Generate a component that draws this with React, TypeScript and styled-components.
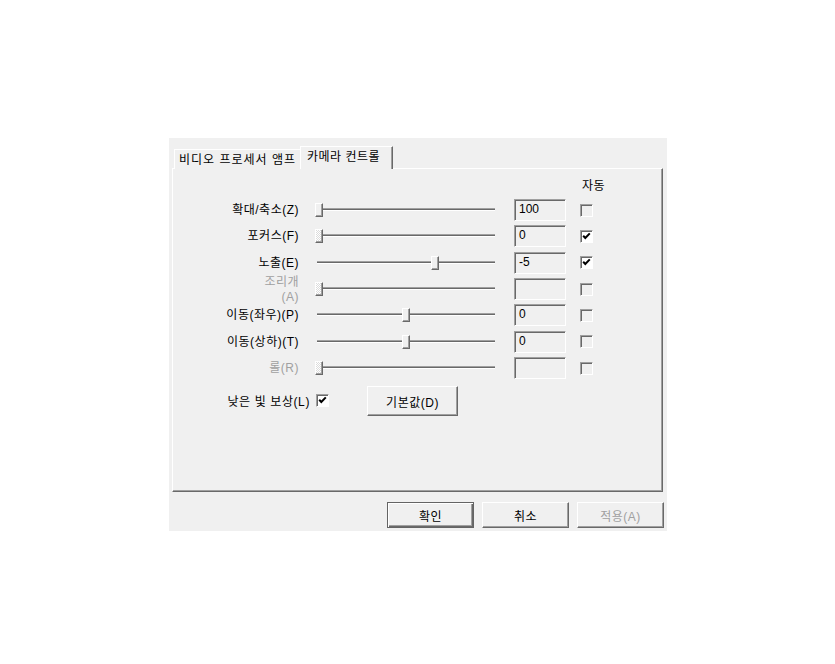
import React from 'react';
import styled, { createGlobalStyle, css } from 'styled-components';

const GlobalStyle = createGlobalStyle`
  html, body {
    margin: 0;
    padding: 0;
    background: #ffffff;
  }
  body {
    font-family: "Liberation Sans", "Noto Sans CJK KR", sans-serif;
    font-size: 12px;
    color: #000000;
  }
`;

const raised = css`
  border: 1px solid;
  border-color: #ffffff #696969 #696969 #ffffff;
  box-shadow: inset -1px -1px #a0a0a0;
`;

const sunken = css`
  border: 1px solid;
  border-color: #a0a0a0 #ffffff #ffffff #a0a0a0;
  box-shadow: inset 1px 1px #696969;
`;

const Page = styled.div`
  padding: 138px 0 0 169px;
`;

const Dialog = styled.div`
  width: 498px;
  box-sizing: border-box;
  padding: 8px 4px 3px 3px;
  background: #f0f0f0;
  display: flex;
  flex-direction: column;
`;

const TabStrip = styled.div`
  display: flex;
  align-items: flex-end;
  height: 23px;
  margin-bottom: -1px;
  padding-left: 2px;
  position: relative;
  z-index: 1;
`;

const Tab = styled.div<{ $active?: boolean; $width: number }>`
  box-sizing: border-box;
  position: relative;
  z-index: ${(p) => (p.$active ? 2 : 1)};
  width: ${(p) => p.$width}px;
  height: ${(p) => (p.$active ? 23 : 20)}px;
  margin-left: ${(p) => (p.$active ? -2 : 0)}px;
  background: #f0f0f0;
  border-top: 1px solid #ffffff;
  border-left: 1px solid #ffffff;
  border-right: 1px solid #696969;
  box-shadow: inset -1px 0 #a0a0a0;
  padding: ${(p) => (p.$active ? '2px 0 0 6px' : '2px 0 0 4px')};
  letter-spacing: ${(p) => (p.$active ? 0.5 : 1)}px;
  white-space: nowrap;
  line-height: 16px;
`;

const Panel = styled.div`
  box-sizing: border-box;
  width: 491px;
  height: 324px;
  border: 1px solid;
  border-color: #ffffff #696969 #696969 #ffffff;
  box-shadow: inset -1px -1px #a0a0a0;
  padding-top: 2px;
`;

const HeaderRow = styled.div`
  height: 26px;
  display: flex;
  align-items: center;
  padding-left: 409px;
  letter-spacing: 0.5px;
`;

const Row = styled.div`
  height: 26.33px;
  display: flex;
  align-items: center;
`;

const Label = styled.div<{ $disabled?: boolean }>`
  width: 126px;
  text-align: right;
  line-height: 15px;
  padding-top: 1px;
  letter-spacing: 0.5px;
  color: ${(p) => (p.$disabled ? '#a0a0a0' : '#000000')};
`;

const SliderBox = styled.div`
  position: relative;
  width: 180px;
  height: 14px;
  margin-left: 16px;
`;

const Track = styled.div`
  position: absolute;
  left: 2px;
  right: 0;
  top: 5px;
  height: 1px;
  background: #696969;
  border-top: 1px solid #a0a0a0;
  border-bottom: 1px solid #ffffff;
`;

const Thumb = styled.div<{ $dither?: boolean }>`
  position: absolute;
  top: 0;
  width: 8px;
  height: 14px;
  box-sizing: border-box;
  ${raised};
  background: ${(p) =>
    p.$dither
      ? 'repeating-conic-gradient(#ffffff 0 25%, #dcdcdc 0 50%) 0 0 / 2px 2px'
      : '#f0f0f0'};
`;

const Edit = styled.div`
  box-sizing: border-box;
  width: 52px;
  height: 22px;
  margin-left: 19px;
  ${sunken};
  background: #f0f0f0;
  padding: 2px 0 0 4px;
  line-height: 15px;
`;

const CheckBox = styled.div<{ $checked?: boolean; $gap: number }>`
  box-sizing: border-box;
  width: 13px;
  height: 13px;
  margin-left: ${(p) => p.$gap}px;
  ${sunken};
  background: ${(p) => (p.$checked ? '#ffffff' : '#f0f0f0')};
  display: flex;
  align-items: center;
  justify-content: center;
  flex: none;
`;

const BottomRow = styled.div`
  display: flex;
  align-items: center;
  height: 30px;
  margin-top: 4px;
`;

const LowLightLabel = styled.div`
  width: 137px;
  text-align: right;
  letter-spacing: 0.6px;
`;

const PushButton = styled.button<{ $default?: boolean; $width: number; $height: number }>`
  box-sizing: border-box;
  width: ${(p) => p.$width}px;
  height: ${(p) => p.$height}px;
  font: inherit;
  letter-spacing: 0.5px;
  color: #000000;
  background: #f0f0f0;
  padding: 0;
  border: 1px solid;
  border-color: #ffffff #696969 #696969 #ffffff;
  box-shadow: inset -1px -1px #a0a0a0;
  ${(p) =>
    p.$default &&
    css`
      border-color: #646464;
      box-shadow: inset 1px 1px #ffffff, inset -1px -1px #696969, inset -2px -2px #a0a0a0;
    `}
  &:disabled {
    color: #a0a0a0;
  }
`;

const DefaultsButton = styled(PushButton)`
  margin-left: 38px;
  margin-top: 2px;
`;

const ButtonBar = styled.div`
  display: flex;
  justify-content: flex-end;
  gap: 8px;
  margin-top: 10px;
  margin-right: -1px;
`;

const CheckMark = () => (
  <svg width="9" height="9" viewBox="0 0 9 9">
    <polyline points="1.2,3.8 3.3,6 7.8,1.4" fill="none" stroke="#000" strokeWidth="2" />
  </svg>
);

interface IControl {
  label: React.ReactNode;
  pos: number;
  value: string;
  auto: boolean;
  disabled?: boolean;
  dither?: boolean;
}

const controls: Array<IControl> = [
  { label: '확대/축소(Z)', pos: 0, value: '100', auto: false },
  { label: '포커스(F)', pos: 0, value: '0', auto: true, dither: true },
  { label: '노출(E)', pos: 116, value: '-5', auto: true },
  {
    label: (
      <>
        조리개
        <br />
        (A)
      </>
    ),
    pos: 0,
    value: '',
    auto: false,
    disabled: true,
    dither: true,
  },
  { label: '이동(좌우)(P)', pos: 87, value: '0', auto: false },
  { label: '이동(상하)(T)', pos: 87, value: '0', auto: false },
  { label: '롤(R)', pos: 0, value: '', auto: false, disabled: true, dither: true },
];

const App: React.FunctionComponent = () => {
  return (
    <Page>
      <GlobalStyle />
      <Dialog>
        <TabStrip>
          <Tab $width={128}>비디오 프로세서 앰프</Tab>
          <Tab $width={93} $active>
            카메라 컨트롤
          </Tab>
        </TabStrip>
        <Panel>
          <HeaderRow>자동</HeaderRow>
          {controls.map((item, index) => (
            <Row key={index}>
              <Label $disabled={item.disabled}>{item.label}</Label>
              <SliderBox>
                <Track />
                <Thumb $dither={item.dither} style={{ left: item.pos }} />
              </SliderBox>
              <Edit>{item.value}</Edit>
              <CheckBox $gap={14} $checked={item.auto}>
                {item.auto && <CheckMark />}
              </CheckBox>
            </Row>
          ))}
          <BottomRow>
            <LowLightLabel>낮은 빛 보상(L)</LowLightLabel>
            <CheckBox $gap={6} $checked>
              <CheckMark />
            </CheckBox>
            <DefaultsButton $width={91} $height={30}>
              기본값(D)
            </DefaultsButton>
          </BottomRow>
        </Panel>
        <ButtonBar>
          <PushButton $default $width={87} $height={26}>
            확인
          </PushButton>
          <PushButton $width={87} $height={26}>
            취소
          </PushButton>
          <PushButton $width={87} $height={26} disabled>
            적용(A)
          </PushButton>
        </ButtonBar>
      </Dialog>
    </Page>
  );
};

export default App;
